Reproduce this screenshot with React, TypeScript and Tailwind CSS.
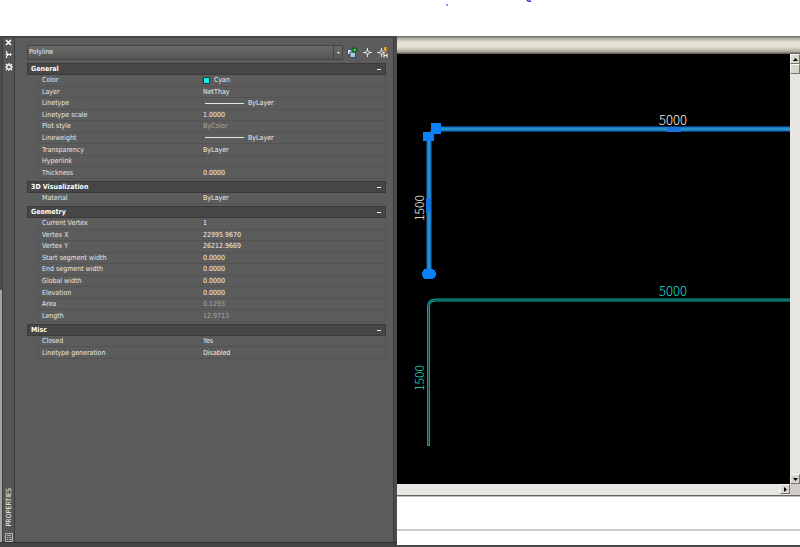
import type { ReactNode } from 'react'

type Row = { label: string; value: string; kind?: 'swatch' | 'line' | 'muted' }
type Group = { title: string; height: string; rows: Row[] }

const groups: Group[] = [
  {
    title: 'General',
    height: 'h-[104px]',
    rows: [
      { label: 'Color', value: 'Cyan', kind: 'swatch' },
      { label: 'Layer', value: 'NetThay' },
      { label: 'Linetype', value: 'ByLayer', kind: 'line' },
      { label: 'Linetype scale', value: '1.0000' },
      { label: 'Plot style', value: 'ByColor', kind: 'muted' },
      { label: 'Lineweight', value: 'ByLayer', kind: 'line' },
      { label: 'Transparency', value: 'ByLayer' },
      { label: 'Hyperlink', value: '' },
      { label: 'Thickness', value: '0.0000' },
    ],
  },
  {
    title: '3D Visualization',
    height: 'h-[11px]',
    rows: [{ label: 'Material', value: 'ByLayer' }],
  },
  {
    title: 'Geometry',
    height: 'h-[104px]',
    rows: [
      { label: 'Current Vertex', value: '1' },
      { label: 'Vertex X', value: '22995.9670' },
      { label: 'Vertex Y', value: '26212.9669' },
      { label: 'Start segment width', value: '0.0000' },
      { label: 'End segment width', value: '0.0000' },
      { label: 'Global width', value: '0.0000' },
      { label: 'Elevation', value: '0.0000' },
      { label: 'Area', value: '0.1293', kind: 'muted' },
      { label: 'Length', value: '12.9713', kind: 'muted' },
    ],
  },
  {
    title: 'Misc',
    height: 'h-[23px]',
    rows: [
      { label: 'Closed', value: 'Yes' },
      { label: 'Linetype generation', value: 'Disabled' },
    ],
  },
]

function IconButton(props: { label: string; children: ReactNode }) {
  return (
    <button type="button" aria-label={props.label} className="flex shrink-0 items-center justify-center">
      {props.children}
    </button>
  )
}

function PropertyValue({ row }: { row: Row }) {
  return (
    <span className={`flex items-center ${row.kind === 'muted' ? 'text-[#a8a8a8]' : 'text-[#f0f0f0]'}`}>
      {row.kind === 'swatch' && (
        <span className="mr-1 size-[7px] rounded-[1px] border border-[#153c3c] bg-[#10f0e8]" />
      )}
      {row.kind === 'line' && <span className="mr-1 ml-[2px] h-px w-[39px] bg-[#e4e4e4]" />}
      {row.value}
    </span>
  )
}

function PropertyGroup({ group }: { group: Group }) {
  return (
    <section className="mb-[2px]">
      <button
        type="button"
        aria-expanded="true"
        className="flex h-3 w-full items-center justify-between border border-[#3a3a3a] bg-[#464646] pr-1 pl-[3px] text-[7px] leading-[10px] font-bold text-white"
      >
        {group.title}
        <span className="h-px w-1 bg-white" />
      </button>
      <div className="pl-[10px]">
        <table className={`w-full table-fixed border-collapse text-[7px] leading-[10px] ${group.height}`}>
          <tbody>
            {group.rows.map((row) => (
              <tr key={row.label} className="border-b border-[#535353]">
                <th
                  scope="row"
                  className="w-[165px] border-x border-[#565656] p-0 pl-1 text-left font-normal text-[#e8e8e8]"
                >
                  {row.label}
                </th>
                <td className="border-r border-[#565656] p-0">
                  <PropertyValue row={row} />
                </td>
              </tr>
            ))}
          </tbody>
        </table>
      </div>
    </section>
  )
}

function PaletteRail() {
  return (
    <div className="flex w-[13px] shrink-0 flex-col items-center border-x border-r-[#3b3b3b] border-l-[#3f3f3f] bg-[#555555]">
      <div className="flex flex-col items-center gap-[5px] pt-px">
        <IconButton label="Close">
          <svg width="7" height="7" viewBox="0 0 7 7" stroke="#fff" strokeWidth="1.6">
            <path d="M1 1 6 6M6 1 1 6" />
          </svg>
        </IconButton>
        <IconButton label="Auto-hide">
          <svg width="7" height="7" viewBox="0 0 7 7">
            <path d="M1.500 0v7" stroke="#fff" strokeWidth="1.2" strokeDasharray="2 .6" />
            <path d="M2 1.500 4.500 3.500 2 5.500z" fill="#fff" />
            <path d="M4 3.500h2.500M5.500 2v3" stroke="#fff" strokeWidth="1" />
          </svg>
        </IconButton>
        <IconButton label="Palette settings">
          <svg width="8" height="8" viewBox="0 0 8 8" fill="none" stroke="#fff">
            <circle cx="4" cy="4" r="2.200" strokeWidth="1.200" />
            <path d="M4 0v2M4 6v2M0 4h2M6 4h2M1 1l1.5 1.5M5.5 5.5 7 7M7 1 5.5 2.5M2.5 5.5 1 7" strokeWidth="1.200" />
          </svg>
        </IconButton>
      </div>
      <div className="mt-auto flex flex-col items-center gap-[7px]">
        <span className="rotate-180 text-[7px] leading-[10px] text-[#f4f4f4] [writing-mode:vertical-rl]">
          PROPERTIES
        </span>
        <svg width="8" height="9" viewBox="0 0 8 9" fill="none" stroke="#b4b4b4" strokeWidth="1">
          <path d="M.5 .5h7v8h-7zM2 2.5h4M2 4.5h1M4 4.5h2.500M2 6.500h1M4 6.500h2.500" />
        </svg>
      </div>
    </div>
  )
}

function PaletteToolbar() {
  return (
    <div className="flex h-[15px] items-center">
      <div className="relative mr-1 h-[15px] min-w-0 grow">
        <select
          aria-label="Selected object"
          className="block h-full w-full appearance-none border border-[#444444] bg-linear-to-b from-[#6b6b6b] to-[#555555] pl-px text-[7px] leading-[11px] text-[#f0f0f0]"
        >
          <option>Polyline</option>
        </select>
        <span className="pointer-events-none absolute inset-y-px right-px flex w-[9px] items-center justify-center border-l border-[#444444]">
          <svg width="3" height="2" viewBox="0 0 3 2" fill="#e8e8e8">
            <path d="M0 0h3L1.500 2z" />
          </svg>
        </span>
      </div>
      <div className="flex shrink-0 items-center gap-[5px]">
        <IconButton label="Toggle PICKADD">
          <svg width="11" height="11" viewBox="0 0 11 11">
            <path d="M.500 2.500h5v5h-5z" fill="#d7e6f7" stroke="#25405f" strokeWidth=".8" />
            <path d="M3 5h5.500v5.500H3z" fill="#a9c9ec" stroke="#1e3a5c" strokeWidth=".8" />
            <ellipse cx="7.500" cy="3" rx="3.300" ry="2.700" fill="#125c1e" />
            <path d="M5.800 3h3.600M7.800 1.400v3.200" stroke="#4dcc60" strokeWidth="1" />
          </svg>
        </IconButton>
        <IconButton label="Select objects">
          <svg width="9" height="9" viewBox="0 0 9 9" fill="none" stroke="#e6e6e6">
            <path d="M4.500 0v3M4.500 6v3M0 4.500h3M6 4.500h3" />
            <path d="M3 3h3v3H3z" strokeWidth=".8" />
          </svg>
        </IconButton>
        <IconButton label="Quick select">
          <svg width="11" height="11" viewBox="0 0 11 11" fill="none">
            <path d="M4.500 1v3M4.500 7v3M0 5.500h3M6 5.500h2" stroke="#e6e6e6" />
            <path d="M3 4h3v3H3z" stroke="#e6e6e6" strokeWidth=".8" />
            <path d="M10 0H7.500L6.500 3.500H8L7.500 6 10.500 2.500H9z" fill="#f2a52c" />
            <path d="M7 6.500v4M10 6.500v4M7 8.500h3" stroke="#f4e6c8" strokeWidth="1.200" />
          </svg>
        </IconButton>
      </div>
    </div>
  )
}

function PropertiesPalette() {
  return (
    <aside className="flex w-[397px] shrink-0 flex-col bg-[#444444]">
      <div className="flex grow border-t-2 border-b border-t-[#454545] border-b-[#333333]">
        <div className="flex w-[2px] shrink-0 flex-col">
          <div className="grow bg-[#4b4b4b]" />
          <div className="h-1/2 bg-[#a5a5a5]" />
        </div>
        <PaletteRail />
        <div className="min-w-0 grow border-r border-[#3b3b3b] bg-[#5c5c5c] pt-[7px] pr-[5px] pl-3">
          <PaletteToolbar />
          <div className="pt-[3px] pr-[2px]">
            {groups.map((group) => (
              <PropertyGroup key={group.title} group={group} />
            ))}
          </div>
        </div>
        <div className="w-[3px] shrink-0 bg-[#4c4c4c]" />
      </div>
      <div className="h-1" />
    </aside>
  )
}

function Drawing() {
  return (
    <svg className="min-w-0 grow self-stretch bg-black" role="img" aria-label="Model space">
      <g fontFamily="'Noto Sans CJK JP', 'Liberation Sans', sans-serif" fontWeight="300" textAnchor="middle">
        <g fill="#f4f4f4">
          <text x="276" y="71" fontSize="13">5000</text>
          <text transform="translate(27 154) rotate(-90)" fontSize="12">1500</text>
        </g>
        <g fill="#1fdccd">
          <text x="276" y="242" fontSize="13">5000</text>
          <text transform="translate(27 324) rotate(-90)" fontSize="12">1500</text>
        </g>
      </g>
      <path d="M32 220V82L39 75H4000" fill="none" stroke="#1478cc" strokeWidth="5" />
      <path d="M32 220V82L39 75H4000" fill="none" stroke="#2790c4" strokeWidth="2" />
      <g fill="#0a80fa">
        <path d="M34 69h10v11H34zM26 78h11v9H26z" />
        <path d="M27 215h9v1h2v2h1v4h-1v2h-2v1h-9v-1h-1v-2h-1v-4h1v-2h1z" />
      </g>
      <path d="M270 73h14v5h-14zM29 144h5v14h-5z" fill="#1672dd" />
      <path d="M31.500 392V252.500Q31.500 246 39 246H4000" fill="none" stroke="#129e96" strokeWidth="3" />
      <path d="M31.500 391V252.500Q31.500 246 39 246H4000" fill="none" stroke="#0a4643" strokeWidth="1" />
    </svg>
  )
}

function ScrollArrow({ label, d }: { label: string; d: string }) {
  return (
    <button
      type="button"
      aria-label={label}
      className="flex size-[10px] shrink-0 items-center justify-center border border-t-[#f5f5f5] border-r-[#77746e] border-b-[#77746e] border-l-[#f5f5f5] bg-[#d8d5cf]"
    >
      <svg width="5" height="5" viewBox="0 0 5 5">
        <path d={d} />
      </svg>
    </button>
  )
}

function DrawingWindow() {
  return (
    <main className="flex min-w-0 grow flex-col bg-white">
      <div className="h-[18px] shrink-0 bg-[linear-gradient(#66665f,#a9a79b_12%,#dcd9ca_30%,#e9e5d5_45%,#e3dfd0_62%,#aeaba0_86%,#55534f)]" />
      <div className="flex min-h-0 grow">
        <Drawing />
        <div className="flex w-[10px] shrink-0 flex-col bg-[#e8e6e3]">
          <ScrollArrow label="Scroll up" d="M0 4h5L2.500 1z" />
          <div className="h-[10px] border border-t-[#f5f5f5] border-r-[#77746e] border-b-[#77746e] border-l-[#f5f5f5] bg-[#d8d5cf]" />
          <div className="grow" />
          <ScrollArrow label="Scroll down" d="M0 1h5L2.500 4z" />
        </div>
      </div>
      <div className="flex h-[12px] shrink-0 border-b border-[#66645f] bg-[#e8e6e3]">
        <div className="grow" />
        <ScrollArrow label="Scroll right" d="M1 0v5L4 2.500z" />
        <div className="w-[10px] bg-[#cfccc6]" />
      </div>
      <div className="h-[33px] shrink-0 border-t border-[#bdbdbd]" />
      <div className="h-4 shrink-0 border-t-2 border-[#cccccc]" />
      <div className="h-[2px] shrink-0 bg-[#484848]" />
    </main>
  )
}

export default function App() {
  return (
    <div className="flex h-screen flex-col bg-white font-['DejaVu_Sans_Condensed','DejaVu_Sans',sans-serif]">
      <header className="h-9 shrink-0 overflow-hidden">
        <svg width="100%" height="8" fill="none" stroke="#2424e8">
          <path d="M447 4v2" strokeWidth="1" />
          <path d="M527 0q1 2 4 1" strokeWidth="1.500" />
        </svg>
      </header>
      <div className="flex min-h-0 grow">
        <PropertiesPalette />
        <DrawingWindow />
      </div>
    </div>
  )
}
